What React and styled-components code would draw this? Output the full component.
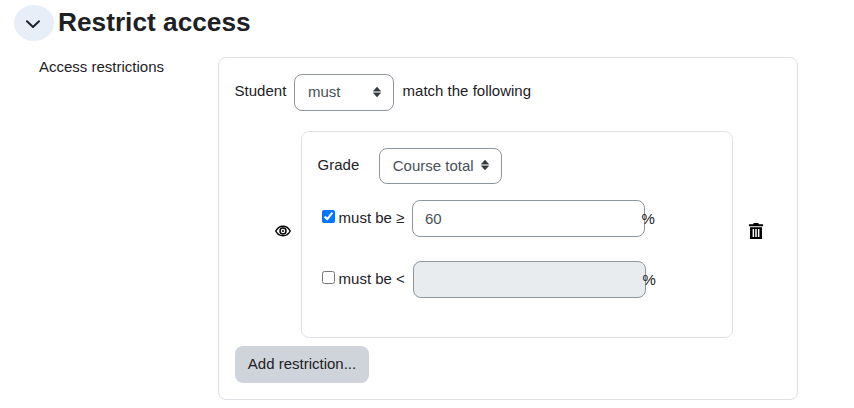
import React from "react";
import styled, { createGlobalStyle } from "styled-components";

const Global = createGlobalStyle`
  html, body { margin: 0; padding: 0; background: #fff; }
  body { font-family: "Liberation Sans", Arial, sans-serif; font-size: 15px; color: #1d2125; width: 854px; height: 408px; overflow: hidden; }
  * { box-sizing: border-box; }
`;

const Page = styled.div`
  display: flex;
  flex-direction: column;
  padding: 5px 0 0 14px;
`;
const Header = styled.div`
  display: flex;
  align-items: center;
  gap: 4px;
  height: 36px;
`;
const Toggle = styled.div`
  width: 40px;
  height: 36px;
  border-radius: 50%;
  background: #e7eef8;
  display: flex;
  align-items: center;
  justify-content: center;
  padding: 1px 2px 0 0;
`;
const Title = styled.h3`
  margin: 0 0 2px;
  font-size: 26.25px;
  line-height: 32px;
  font-weight: 700;
  color: #1d2125;
`;
const FormRow = styled.div`
  display: flex;
  margin-top: 16px;
`;
const FieldLabel = styled.div`
  width: 204px;
  padding: 1px 0 0 25px;
  line-height: 18px;
  height: 20px;
`;
const Card = styled.div`
  width: 580px;
  height: 343px;
  border: 1px solid #dee2e6;
  border-radius: 8px;
  padding: 16px;
  display: flex;
  flex-direction: column;
`;
const TopRow = styled.div`
  display: flex;
  align-items: center;
  height: 37px;
`;
const StudentText = styled.span`
  width: 59.4px;
  margin: 0 0 4px -0.4px;
`;
const MatchText = styled.span`
  margin: 0 0 4px 8.6px;
`;
const Select = styled.div`
  display: flex;
  align-items: center;
  justify-content: space-between;
  width: ${(p) => p.$w}px;
  height: ${(p) => p.$h}px;
  padding: 0 11px 2px 13px;
  border: 1px solid #8f959e;
  border-radius: 8px;
  color: #495057;
  background: #fff;
`;
const GroupRow = styled.div`
  display: flex;
  align-items: center;
  margin-top: 20px;
  height: 207px;
`;
const EyeCol = styled.div`
  width: 66px;
  padding: 0 0 7px 40px;
  display: flex;
`;
const Inner = styled.div`
  width: 432px;
  height: 207px;
  border: 1px solid #dee2e6;
  border-radius: 8px;
  padding: 16px;
  display: flex;
  flex-direction: column;
`;
const GradeRow = styled.div`
  display: flex;
  align-items: center;
  gap: 19.4px;
  height: 36px;
`;
const GradeLabel = styled.span`
  margin: 0 0 4px -0.4px;
`;
const BoundRow = styled.div`
  display: flex;
  align-items: center;
  height: 37px;
  margin-top: ${(p) => p.$top}px;
  padding-left: 3px;
`;
const Check = styled.input`
  width: 13px;
  height: 13px;
  margin: 0 3.6px 4px 1px;
`;
const BoundLabel = styled.span`
  width: ${(p) => p.$w}px;
  white-space: nowrap;
  margin-bottom: 2px;
`;
const NumInput = styled.input`
  width: 233px;
  height: 37px;
  padding: 0 12px;
  border: 1px solid #8f959e;
  border-radius: 8px;
  font: inherit;
  color: #495057;
  background: ${(p) => (p.disabled ? "#e9ecef" : "#fff")};
  outline: none;
`;
const Percent = styled.span`
  margin-left: -3.4px;
`;
const TrashCol = styled.div`
  padding: 0 0 7px 16px;
  display: flex;
`;
const AddButton = styled.button`
  width: 134px;
  height: 37px;
  margin-top: 8px;
  border: none;
  border-radius: 8px;
  background: #ced4da;
  color: #1d2125;
  font: inherit;
  padding: 0 0 2px;
`;

const Updown = () => (
  <svg width="10" height="14" viewBox="0 0 10 14">
    <path d="M5 2 8.800 6.200H1.200zM5 12 1.200 7.800h7.600z" fill="#343a40" stroke="#343a40" strokeWidth=".4" strokeLinejoin="round" />
  </svg>
);

export default function App() {
  return (
    <Page>
      <Global />
      <Header>
        <Toggle>
          <svg width="16" height="16" viewBox="0 0 16 16">
            <path d="M2 5.200 8 11l6-5.800" fill="none" stroke="#1d2125" strokeWidth="2" strokeLinecap="round" strokeLinejoin="round" />
          </svg>
        </Toggle>
        <Title>Restrict access</Title>
      </Header>
      <FormRow>
        <FieldLabel>Access restrictions</FieldLabel>
        <Card>
          <TopRow>
            <StudentText>Student</StudentText>
            <Select $w={100} $h={37}>must<Updown /></Select>
            <MatchText>match the following</MatchText>
          </TopRow>
          <GroupRow>
            <EyeCol>
              <svg width="16" height="16" viewBox="0 0 16 16">
                <path d="M.8 8C2.400 5 5 3.200 8 3.200S13.600 5 15.200 8C13.600 11 11 12.800 8 12.800S2.400 11 .8 8Z" fill="none" stroke="#000" strokeWidth="1.500" />
                <circle cx="8" cy="8" r="3" fill="none" stroke="#000" strokeWidth="1.500" />
                <circle cx="8" cy="8" r="1" fill="#000" />
              </svg>
            </EyeCol>
            <Inner>
              <GradeRow>
                <GradeLabel>Grade</GradeLabel>
                <Select $w={123} $h={36}>Course total<Updown /></Select>
              </GradeRow>
              <BoundRow $top={16}>
                <Check type="checkbox" defaultChecked />
                <BoundLabel $w={73.4}>must be ≥</BoundLabel>
                <NumInput defaultValue="60" />
                <Percent>%</Percent>
              </BoundRow>
              <BoundRow $top={24}>
                <Check type="checkbox" />
                <BoundLabel $w={74.4}>must be &lt;</BoundLabel>
                <NumInput disabled />
                <Percent>%</Percent>
              </BoundRow>
            </Inner>
            <TrashCol>
              <svg width="14" height="16" viewBox="0 0 14 16">
                <path d="M4.800 0h4.400l.7 1.300H14v1.900H0V1.300h4.100zM1 4.200h12V16H1zM3.600 6v8h1.500V6zm2.650 0v8h1.500V6zm2.650 0v8h1.500V6z" fill="#000" fillRule="evenodd" />
              </svg>
            </TrashCol>
          </GroupRow>
          <AddButton>Add restriction...</AddButton>
        </Card>
      </FormRow>
    </Page>
  );
}
